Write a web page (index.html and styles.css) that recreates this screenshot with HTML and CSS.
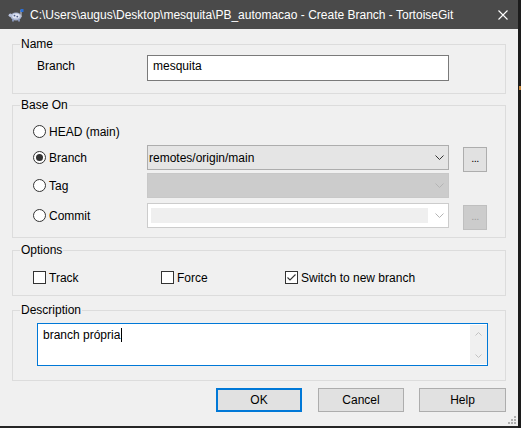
FILE: index.html
```html
<!DOCTYPE html>
<html lang="pt">
<head>
<meta charset="utf-8">
<title>Create Branch - TortoiseGit</title>
<link rel="stylesheet" href="styles.css">
</head>
<body>
<div class="screen">
  <div class="window">
    <div class="titlebar">
      <svg class="app-icon" viewBox="0 0 16 16">
        <ellipse cx="8" cy="9.5" rx="5.5" ry="4" fill="#a9b4d0"/>
        <ellipse cx="8" cy="9" rx="3.8" ry="2.6" fill="#dfe4f2"/>
        <circle cx="6.5" cy="8.6" r="0.9" fill="#4a5a86"/>
        <circle cx="9.3" cy="9.6" r="0.9" fill="#4a5a86"/>
        <circle cx="2.4" cy="8.2" r="1.8" fill="#b8c2dc"/>
        <rect x="4" y="12.5" width="2" height="2" fill="#8592b4"/>
        <rect x="10" y="12.5" width="2" height="2" fill="#8592b4"/>
        <rect x="12.5" y="3" width="1" height="7" fill="#c9cede"/>
        <rect x="12.5" y="2" width="3" height="3" fill="#2a6fd6"/>
      </svg>
      <span class="title">C:\Users\augus\Desktop\mesquita\PB_automacao - Create Branch - TortoiseGit</span>
      <svg class="close" viewBox="0 0 10 10"><path d="M0.5 0.5 L9.5 9.5 M9.5 0.5 L0.5 9.5" stroke="#ffffff" stroke-width="1.1" fill="none"/></svg>
    </div>

    <div class="content">
      <section class="group g-name">
        <div class="legend">Name</div>
        <div class="name-row">
          <span class="field-label">Branch</span>
          <div class="textbox">mesquita</div>
        </div>
      </section>

      <section class="group g-base">
        <div class="legend">Base On</div>
        <div class="opt-row r-head">
          <span class="radio-opt">
            <svg class="radio" viewBox="0 0 13 13"><circle cx="6.5" cy="6.5" r="6" fill="#fff" stroke="#333"/></svg>
            <span>HEAD (main)</span>
          </span>
        </div>
        <div class="opt-row r-branch">
          <span class="radio-opt">
            <svg class="radio" viewBox="0 0 13 13"><circle cx="6.5" cy="6.5" r="6" fill="#fff" stroke="#333"/><circle cx="6.5" cy="6.5" r="3.5" fill="#333"/></svg>
            <span>Branch</span>
          </span>
          <div class="combo combo-enabled">
            <span class="combo-text">remotes/origin/main</span>
            <svg class="chev" viewBox="0 0 9 5"><path d="M0.5 0.5 L4.5 4.5 L8.5 0.5" stroke="#333" fill="none"/></svg>
          </div>
          <div class="dots-btn">...</div>
        </div>
        <div class="opt-row r-tag">
          <span class="radio-opt">
            <svg class="radio" viewBox="0 0 13 13"><circle cx="6.5" cy="6.5" r="6" fill="#fff" stroke="#333"/></svg>
            <span>Tag</span>
          </span>
          <div class="combo combo-disabled">
            <span class="combo-text"></span>
            <svg class="chev" viewBox="0 0 9 5"><path d="M0.5 0.5 L4.5 4.5 L8.5 0.5" stroke="#b4b4b4" fill="none"/></svg>
          </div>
        </div>
        <div class="opt-row r-commit">
          <span class="radio-opt">
            <svg class="radio" viewBox="0 0 13 13"><circle cx="6.5" cy="6.5" r="6" fill="#fff" stroke="#333"/></svg>
            <span>Commit</span>
          </span>
          <div class="combo combo-edit">
            <span class="combo-field"></span>
            <svg class="chev" viewBox="0 0 9 5"><path d="M0.5 0.5 L4.5 4.5 L8.5 0.5" stroke="#b4b4b4" fill="none"/></svg>
          </div>
          <div class="dots-btn dots-disabled">...</div>
        </div>
      </section>

      <section class="group g-options">
        <div class="legend">Options</div>
        <div class="check-row">
          <span class="check-opt c-track">
            <svg class="checkbox" viewBox="0 0 13 13"><rect x="0.5" y="0.5" width="12" height="12" fill="#fff" stroke="#333"/></svg>
            <span>Track</span>
          </span>
          <span class="check-opt c-force">
            <svg class="checkbox" viewBox="0 0 13 13"><rect x="0.5" y="0.5" width="12" height="12" fill="#fff" stroke="#333"/></svg>
            <span>Force</span>
          </span>
          <span class="check-opt">
            <svg class="checkbox" viewBox="0 0 13 13"><rect x="0.5" y="0.5" width="12" height="12" fill="#fff" stroke="#333"/><path d="M2.5 6.5 L5 9 L10.5 3.5" stroke="#333" stroke-width="1.1" fill="none"/></svg>
            <span>Switch to new branch</span>
          </span>
        </div>
      </section>

      <section class="group g-desc">
        <div class="legend">Description</div>
        <div class="memo">
          <div class="memo-text">branch própria<span class="caret"></span></div>
          <div class="scrollbar">
            <span class="sb-arrow"><svg viewBox="0 0 7 4"><path d="M0.5 3.5 L3.5 0.5 L6.5 3.5" stroke="#c2c2c2" fill="none"/></svg></span>
            <span class="sb-arrow"><svg viewBox="0 0 7 4"><path d="M0.5 0.5 L3.5 3.5 L6.5 0.5" stroke="#c2c2c2" fill="none"/></svg></span>
          </div>
        </div>
      </section>

      <div class="buttons">
        <div class="btn btn-default">OK</div>
        <div class="btn btn-cancel">Cancel</div>
        <div class="btn btn-help">Help</div>
      </div>
    </div>

    <svg class="grip" viewBox="0 0 10 10">
      <rect x="8" y="2" width="2" height="2" fill="#b0b0b0"/>
      <rect x="5" y="5" width="2" height="2" fill="#b0b0b0"/>
      <rect x="8" y="5" width="2" height="2" fill="#b0b0b0"/>
      <rect x="2" y="8" width="2" height="2" fill="#b0b0b0"/>
      <rect x="5" y="8" width="2" height="2" fill="#b0b0b0"/>
      <rect x="8" y="8" width="2" height="2" fill="#b0b0b0"/>
    </svg>
  </div>
  <div class="edge"><span class="edge-mark"></span></div>
</div>
</body>
</html>
```

FILE: styles.css
```css
* { box-sizing: border-box; }
html, body { margin: 0; padding: 0; }
body {
  width: 521px;
  height: 428px;
  overflow: hidden;
  background: #262626;
  font-family: "Liberation Sans", Arial, sans-serif;
  font-size: 12px;
  color: #000;
}
.screen { display: flex; height: 428px; }
.window {
  position: relative;
  width: 518px;
  height: 426px;
  flex: none;
  background: #f0f0f0;
  display: flex;
  flex-direction: column;
}
.edge { flex: 1; background: #1c1c1c; display: flex; flex-direction: column; }
.edge-mark { display: block; width: 2px; height: 4px; margin: 86px 0 0 1px; background: #c8873a; }

.titlebar {
  flex: none;
  height: 29px;
  background: #4a4a4a;
  color: #fff;
  display: flex;
  align-items: center;
  padding-left: 8px;
}
.app-icon { width: 16px; height: 16px; margin-right: 6px; flex: none; }
.title { line-height: 16px; white-space: nowrap; }
.close { width: 10px; height: 10px; margin-left: auto; margin-right: 10px; flex: none; }

.content { padding: 0 12px; display: flex; flex-direction: column; }

.group { border: 1px solid #dcdcdc; }
.legend {
  margin: -9px 0 0 7px;
  padding: 0 1px;
  height: 16px;
  line-height: 16px;
  width: fit-content;
  background: #f0f0f0;
}

/* Name */
.g-name { margin-top: 15px; height: 50px; }
.name-row { display: flex; align-items: baseline; margin-top: 3px; padding-left: 24px; }
.field-label { width: 110px; line-height: 16px; }
.textbox {
  width: 302px;
  height: 26px;
  border: 1px solid #7a7a7a;
  background: #fff;
  padding: 2px 5px 0;
  line-height: 16px;
}

/* Base On */
.g-base { margin-top: 11px; height: 133px; }
.opt-row { display: flex; align-items: center; height: 25px; padding-left: 20px; }
.r-head { margin-top: 6px; }
.r-branch { margin-top: 1px; }
.r-tag { margin-top: 3px; }
.r-commit { margin-top: 5px; }
.radio-opt { width: 114px; display: flex; align-items: center; line-height: 16px; }
.radio { width: 13px; height: 13px; margin-right: 3px; flex: none; }

.combo {
  width: 302px;
  height: 25px;
  display: flex;
  align-items: center;
  line-height: 16px;
  flex: none;
}
.combo-enabled { border: 1px solid #adadad; background: #e5e5e5; padding-left: 1px; }
.combo-disabled { border: 1px solid #c8c8c8; background: #cccccc; }
.combo-edit { border: 1px solid #cccccc; background: #fff; padding-left: 3px; }
.combo-text { flex: 1; }
.combo-field { width: 277px; height: 15px; background: #efefef; align-self: flex-start; margin-top: 4px; }
.chev { width: 9px; height: 5px; margin-left: auto; margin-right: 4px; flex: none; }

.dots-btn {
  width: 24px;
  height: 25px;
  margin: 2px 0 0 14px;
  align-self: flex-start;
  border: 1px solid #adadad;
  background: #e1e1e1;
  text-align: center;
  line-height: 21px;
  font-size: 11px;
  letter-spacing: -0.5px;
}
.dots-disabled { border-color: #bfbfbf; background: #cccccc; color: #a0a0a0; }

/* Options */
.g-options { margin-top: 12px; height: 46px; }
.check-row { display: flex; align-items: center; height: 17px; margin-top: 11px; padding-left: 20px; }
.check-opt { display: flex; align-items: center; line-height: 16px; }
.c-track { width: 128px; }
.c-force { width: 124px; }
.checkbox { width: 13px; height: 13px; margin-right: 3px; flex: none; }

/* Description */
.g-desc { margin-top: 14px; height: 71px; }
.memo {
  display: flex;
  width: 451px;
  height: 43px;
  margin: 5px 0 0 24px;
  border: 1px solid #0078d7;
  background: #fff;
}
.memo-text { flex: 1; padding: 3px 5px 0; line-height: 16px; }
.caret { display: inline-block; width: 1px; height: 14px; background: #000; vertical-align: -3px; margin-left: 1px; }
.scrollbar {
  width: 17px;
  background: #f0f0f0;
  display: flex;
  flex-direction: column;
  justify-content: space-between;
  margin: 1px 0;
}
.sb-arrow { height: 17px; display: flex; align-items: center; justify-content: center; }
.sb-arrow svg { width: 7px; height: 4px; }

/* Buttons */
.buttons { display: flex; justify-content: flex-end; margin-top: 7px; }
.btn {
  height: 24px;
  width: 86px;
  border: 1px solid #adadad;
  background: #e1e1e1;
  display: flex;
  align-items: center;
  justify-content: center;
  line-height: 16px;
}
.btn-default { border: 2px solid #0078d7; }
.btn-cancel { margin-left: 16px; }
.btn-help { margin-left: 15px; width: 87px; }

.grip { position: absolute; right: 2px; bottom: 2px; width: 10px; height: 10px; }
```
